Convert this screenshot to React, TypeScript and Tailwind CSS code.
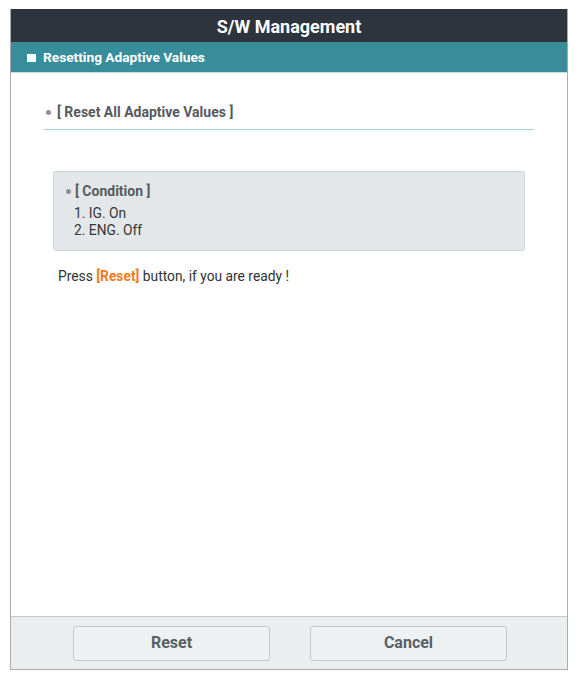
export default function App() {
  return (
    <div className="min-h-[680px] w-[577px] bg-white pl-[10px] pt-[9px] font-['Roboto','Liberation_Sans',sans-serif]">
      <div className="flex h-[661px] w-[558px] flex-col border-x border-b border-[#a9abad]">
        <div className="flex h-[33px] items-center justify-center bg-[#2d343e] pt-[1px] text-[18px] font-bold text-white">
          S/W Management
        </div>
        <div className="flex h-[31px] items-center gap-[7px] border-b border-[#bfe0e3] bg-[#388d9b] pl-[16px] pt-[1px] text-[13.7px] font-bold text-white">
          <span className="h-[8px] w-[9px] bg-white" />
          Resetting Adaptive Values
        </div>
        <div className="flex flex-1 flex-col px-[33px] pt-[30px]">
          <div className="flex items-center gap-[6px] border-b border-[#a9d3d6] pb-[8px] pl-[2px] text-[14px] font-bold leading-[18px] text-[#545a60]">
            <span className="h-[5px] w-[5px] rounded-full bg-[#8a9096]" />
            [ Reset All Adaptive Values ]
          </div>
          <div className="mx-[9px] mt-[41px] h-[80px] rounded-[3px] border border-[#cfd4d7] bg-[#e3e7e9] px-[12px] pt-[10px]">
            <div className="flex items-center gap-[4px] text-[14px] font-bold leading-[18px] text-[#555b60]">
              <span className="h-[5px] w-[5px] rounded-full bg-[#8a9096]" />
              [ Condition ]
            </div>
            <div className="mt-[5px] pl-[8px] text-[13.8px] leading-[17px] text-[#33373b]">
              <div>1. IG. On</div>
              <div>2. ENG. Off</div>
            </div>
          </div>
          <p className="mt-[16px] pl-[14px] text-[13.8px] leading-[18px] text-[#2f3337]">
            Press <span className="font-bold text-[#f07c22]">[Reset]</span> button, if you are ready !
          </p>
        </div>
        <div className="flex h-[53px] items-center gap-[40px] border-t border-[#c6c9cb] bg-[#ebeeee] pl-[62px]">
          <button
            type="button"
            className="h-[35px] w-[197px] rounded-[3px] border border-[#c4c8ca] bg-[#eef1f1] text-[16px] font-bold text-[#5a5f64]"
          >
            Reset
          </button>
          <button
            type="button"
            className="h-[35px] w-[197px] rounded-[3px] border border-[#c4c8ca] bg-[#eef1f1] text-[16px] font-bold text-[#5a5f64]"
          >
            Cancel
          </button>
        </div>
      </div>
    </div>
  );
}
